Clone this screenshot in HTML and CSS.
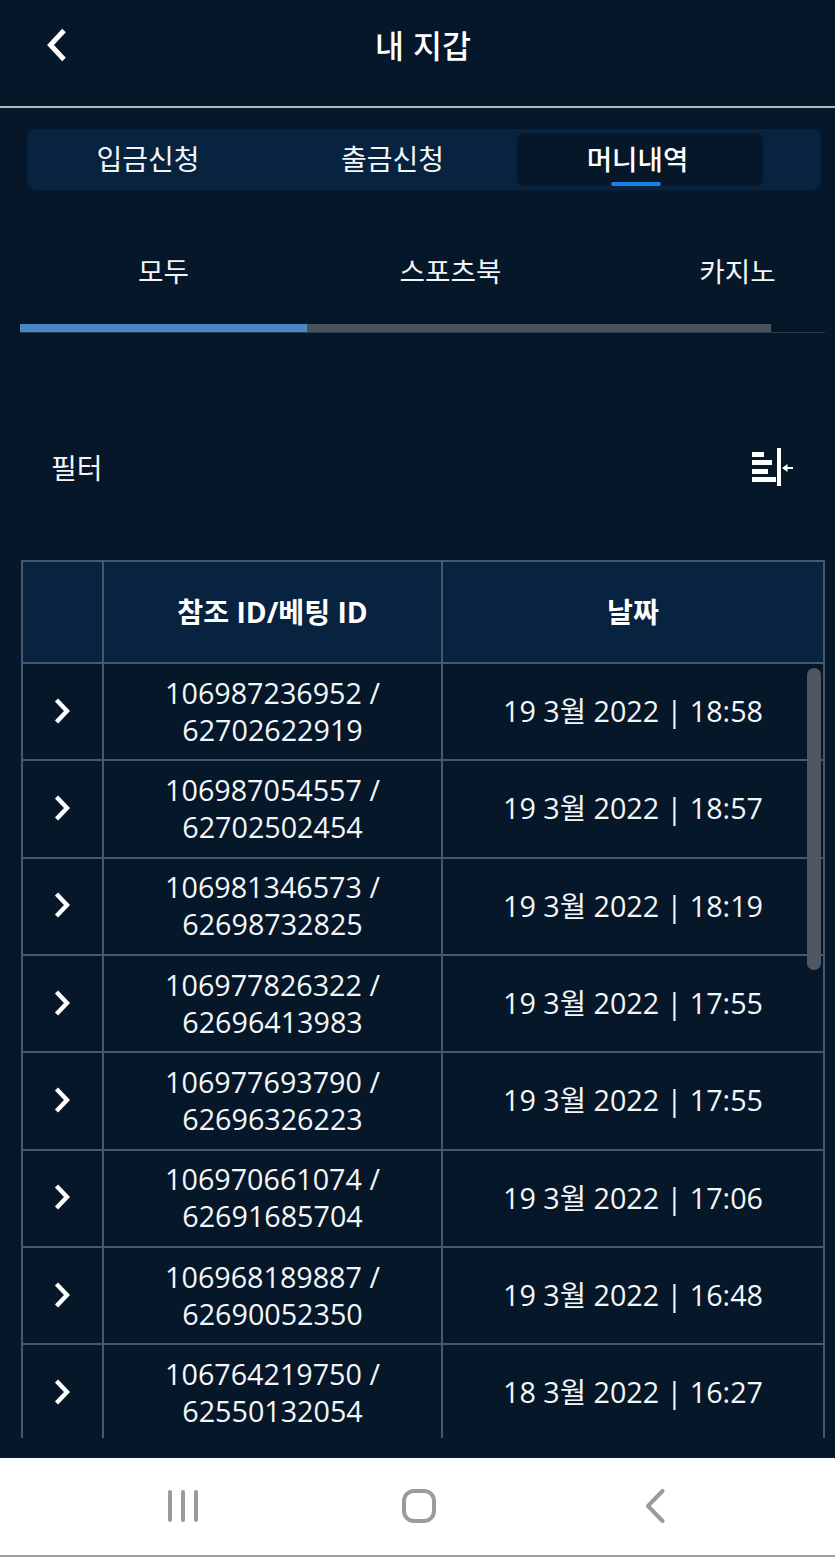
FILE: index.html
```html
<!doctype html>
<html lang="ko">
  <head>
    <meta charset="utf-8">
    <meta name="viewport" content="width=device-width, initial-scale=1.0">
    <title>내 지갑</title>
    <link rel="stylesheet" href="styles.css">
  </head>
  <body>
    <header class="top-bar">
      <svg class="back-icon" width="20" height="34" viewBox="0 0 20 34"><path d="M17 2.5 L3.5 17 L17 31.5" /></svg>
      <h1>내 지갑</h1>
    </header>

    <nav class="wallet-tabs">
      <a class="wallet-tab">입금신청</a>
      <a class="wallet-tab">출금신청</a>
      <a class="wallet-tab active">머니내역</a>
    </nav>

    <nav class="game-tabs">
      <a class="game-tab">모두</a>
      <a class="game-tab">스포츠북</a>
      <a class="game-tab">카지노</a>
    </nav>
    <div class="game-scroll">
      <div class="game-scroll-track">
        <div class="game-scroll-thumb"></div>
      </div>
    </div>

    <div class="filter-row">
      <span>필터</span>
      <svg class="filter-icon" width="41" height="38" viewBox="0 0 41 38">
        <rect x="0" y="4" width="12" height="5" />
        <rect x="0" y="12" width="20" height="5" />
        <rect x="0" y="21" width="16" height="5" />
        <rect x="0" y="29" width="24" height="5" />
        <rect x="25" y="0" width="4" height="38" />
        <rect x="33" y="19" width="8" height="2" />
        <path d="M30 20 L35.5 16 V24 Z" />
      </svg>
    </div>

    <div class="table-wrap">
      <table class="history">
        <thead>
          <tr>
            <th class="col-arrow"></th>
            <th class="col-id">참조 ID/베팅 ID</th>
            <th>날짜</th>
          </tr>
        </thead>
        <tbody>
          <tr>
            <td><svg class="row-arrow" width="16" height="26" viewBox="0 0 16 26"><path d="M2.5 2 L13 13 L2.5 24" /></svg></td>
            <td>106987236952 /<br>62702622919</td>
            <td>19 3월 2022 | 18:58</td>
          </tr>
          <tr>
            <td><svg class="row-arrow" width="16" height="26" viewBox="0 0 16 26"><path d="M2.5 2 L13 13 L2.5 24" /></svg></td>
            <td>106987054557 /<br>62702502454</td>
            <td>19 3월 2022 | 18:57</td>
          </tr>
          <tr>
            <td><svg class="row-arrow" width="16" height="26" viewBox="0 0 16 26"><path d="M2.5 2 L13 13 L2.5 24" /></svg></td>
            <td>106981346573 /<br>62698732825</td>
            <td>19 3월 2022 | 18:19</td>
          </tr>
          <tr>
            <td><svg class="row-arrow" width="16" height="26" viewBox="0 0 16 26"><path d="M2.5 2 L13 13 L2.5 24" /></svg></td>
            <td>106977826322 /<br>62696413983</td>
            <td>19 3월 2022 | 17:55</td>
          </tr>
          <tr>
            <td><svg class="row-arrow" width="16" height="26" viewBox="0 0 16 26"><path d="M2.5 2 L13 13 L2.5 24" /></svg></td>
            <td>106977693790 /<br>62696326223</td>
            <td>19 3월 2022 | 17:55</td>
          </tr>
          <tr>
            <td><svg class="row-arrow" width="16" height="26" viewBox="0 0 16 26"><path d="M2.5 2 L13 13 L2.5 24" /></svg></td>
            <td>106970661074 /<br>62691685704</td>
            <td>19 3월 2022 | 17:06</td>
          </tr>
          <tr>
            <td><svg class="row-arrow" width="16" height="26" viewBox="0 0 16 26"><path d="M2.5 2 L13 13 L2.5 24" /></svg></td>
            <td>106968189887 /<br>62690052350</td>
            <td>19 3월 2022 | 16:48</td>
          </tr>
          <tr>
            <td><svg class="row-arrow" width="16" height="26" viewBox="0 0 16 26"><path d="M2.5 2 L13 13 L2.5 24" /></svg></td>
            <td>106764219750 /<br>62550132054</td>
            <td>18 3월 2022 | 16:27</td>
          </tr>
        </tbody>
      </table>
      <div class="table-scrollbar"></div>
    </div>

    <footer class="system-nav">
      <svg width="32" height="32" viewBox="0 0 32 32"><path d="M3 2 V30 M16 2 V30 M29 2 V30" /></svg>
      <svg width="34" height="34" viewBox="0 0 34 34"><rect x="2" y="2" width="30" height="30" rx="10" /></svg>
      <svg width="20" height="34" viewBox="0 0 20 34"><path d="M17.5 2 L3 17 L17.5 32" /></svg>
    </footer>
  </body>
</html>
```

FILE: styles.css
```css
* {
  box-sizing: border-box;
}

html, body {
  height: 100%;
}

body {
  margin: 0;
  height: 1557px;
  overflow: hidden;
  display: flex;
  flex-direction: column;
  background: #051729;
  color: #f4f6f8;
  font-family: "Open Sans", "Noto Sans CJK KR", sans-serif;
}

.top-bar {
  position: relative;
  flex: none;
  height: 108px;
  border-bottom: 2px solid #b4b7ba;
  display: flex;
  align-items: center;
  justify-content: center;
  padding: 0 0 19px 11px;
}

.top-bar h1 {
  margin: 0;
  font-size: 31.5px;
  font-weight: 500;
  font-family: "Noto Sans CJK KR", sans-serif;
  color: #fff;
}

.back-icon {
  position: absolute;
  left: 47px;
  top: 28px;
}

.back-icon path {
  fill: none;
  stroke: #fff;
  stroke-width: 5;
}

.wallet-tabs {
  flex: none;
  margin: 21px 14px 0 27px;
  height: 61px;
  padding: 4px 0;
  background: #07233f;
  border-radius: 8px;
  display: flex;
}

.wallet-tab {
  position: relative;
  width: 245px;
  display: flex;
  align-items: center;
  justify-content: center;
  padding: 0 4px 4px 0;
  font-family: "Noto Sans CJK KR", sans-serif;
  font-size: 28px;
  border-radius: 8px;
}

.wallet-tab:first-child {
  padding-right: 3px;
}

.wallet-tab.active {
  width: 246px;
  padding-right: 5px;
  background: #051729;
  font-size: 27.6px;
  font-weight: 500;
  color: #fff;
}

.wallet-tab.active::after {
  content: "";
  position: absolute;
  left: 94px;
  bottom: 0;
  width: 50px;
  height: 4px;
  border-radius: 2px;
  background: #1a80e2;
}

.game-tabs {
  flex: none;
  margin: 51px 0 0 20px;
  height: 60px;
  display: flex;
  overflow: hidden;
}

.game-tab {
  flex: none;
  width: 287px;
  text-align: center;
  font-family: "Noto Sans CJK KR", sans-serif;
  font-size: 27.7px;
  line-height: 58px;
}

.game-scroll {
  flex: none;
  margin: 23px 10px 0 20px;
  height: 9px;
  border-bottom: 1px solid #2a3a49;
}

.game-scroll-track {
  width: 751px;
  height: 8px;
  background: #49535c;
}

.game-scroll-thumb {
  width: 287px;
  height: 8px;
  background: #4a87c7;
}

.filter-row {
  flex: none;
  margin-top: 114px;
  height: 40px;
  padding: 0 42px 0 51px;
  display: flex;
  align-items: center;
  justify-content: space-between;
  font-family: "Noto Sans CJK KR", sans-serif;
  font-size: 28px;
}

.filter-icon {
  fill: #fff;
}

.table-wrap {
  position: relative;
  flex: none;
  margin: 73px 10px 0 21px;
  height: 878px;
  overflow: hidden;
}

.history {
  width: 804px;
  table-layout: fixed;
  border-collapse: collapse;
  font-size: 28.7px;
  line-height: 37px;
  text-align: center;
}

.history th, .history td {
  border: 2px solid #44586f;
  padding: 0;
}

.history td {
  padding-bottom: 2px;
}

.history thead tr {
  height: 102px;
  background: #08233f;
}

.history th {
  font-weight: 700;
  font-size: 28.2px;
  color: #fff;
}

.history tbody tr {
  height: 97.33px;
}

.col-arrow {
  width: 81px;
}

.col-id {
  width: 339px;
}

.row-arrow {
  display: block;
  margin: 0 auto 0 31px;
  fill: none;
  stroke: #fff;
  stroke-width: 4.5;
}

.table-scrollbar {
  position: absolute;
  top: 108px;
  right: 4px;
  width: 14px;
  height: 302px;
  border-radius: 7px;
  background: #4f5862;
}

.system-nav {
  flex: none;
  margin-top: 20px;
  height: 99px;
  padding: 0 0 2px 65px;
  background: #fff;
  border-bottom: 2px solid #a0a0a0;
  display: grid;
  grid-template-columns: repeat(3, 236px);
  align-items: center;
  justify-items: center;
}

.system-nav svg {
  fill: none;
  stroke: #9b9b9b;
  stroke-width: 4;
  stroke-linecap: round;
  stroke-linejoin: round;
}
```
